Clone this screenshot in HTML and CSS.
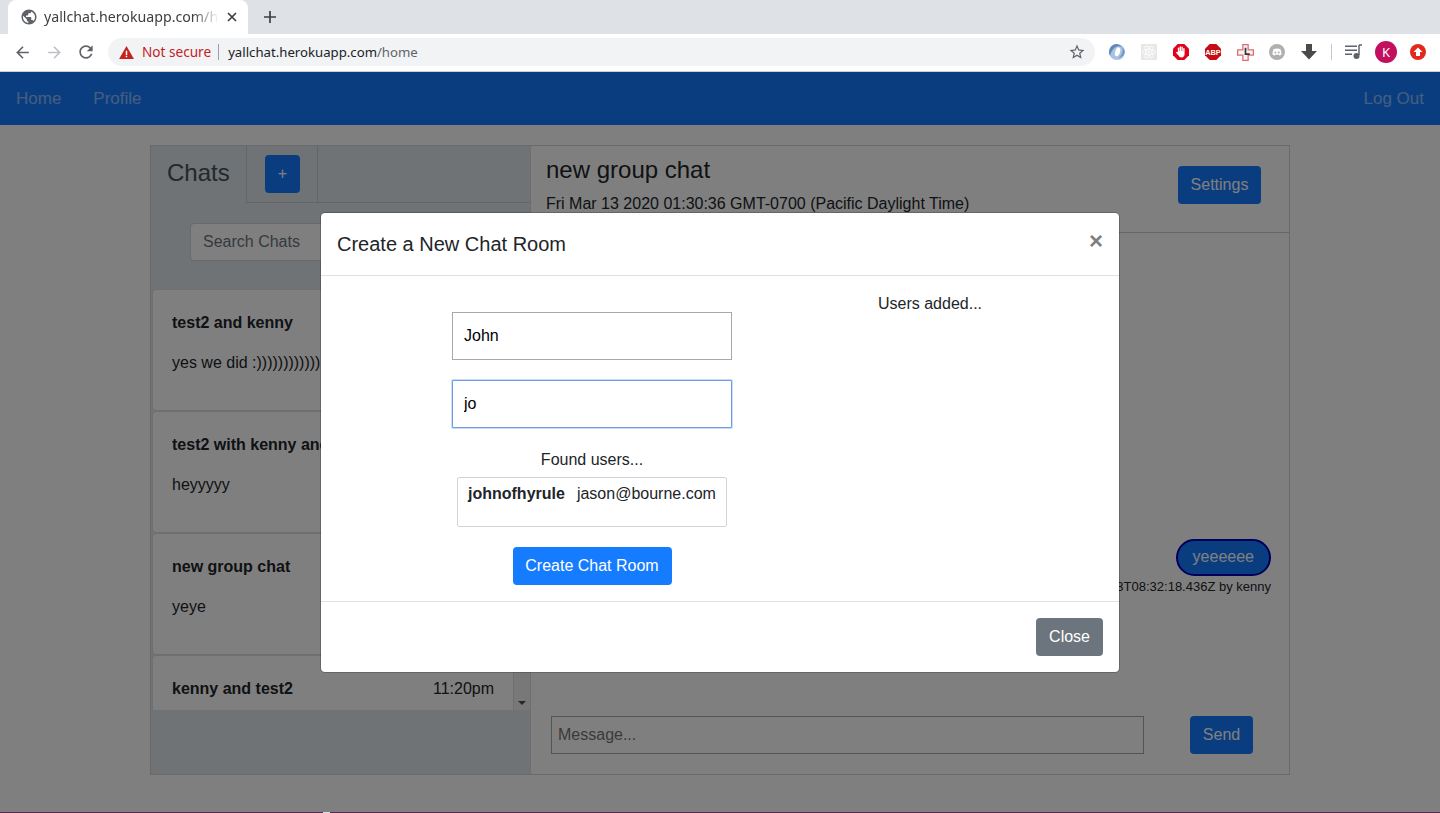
FILE: index.html
```html
<!DOCTYPE html>
<html lang="en">
<head>
<meta charset="utf-8">
<title>yallchat.herokuapp.com/home</title>
<link rel="stylesheet" href="styles.css">
</head>
<body>
<div class="browser">
  <div class="tabstrip">
    <div class="tab">
      <svg class="favicon" viewBox="0 0 24 24" width="18" height="18"><path fill="#5f6368" d="M12 2C6.48 2 2 6.48 2 12s4.48 10 10 10 10-4.48 10-10S17.52 2 12 2zm-1 17.93c-3.95-.49-7-3.85-7-7.93 0-.62.08-1.21.21-1.79L9 15v1c0 1.1.9 2 2 2v1.93zm6.9-2.54c-.26-.81-1-1.39-1.9-1.39h-1v-3c0-.55-.45-1-1-1H8v-2h2c.55 0 1-.45 1-1V7h2c1.1 0 2-.9 2-2v-.41c2.93 1.19 5 4.06 5 7.41 0 2.08-.8 3.97-2.1 5.39z"/></svg>
      <span class="tab-title">yallchat.herokuapp.com/home</span>
      <svg class="tab-x" viewBox="0 0 10 10" width="10" height="10"><path d="M1 1l8 8M9 1l-8 8" stroke="#3c4043" stroke-width="1.7" fill="none"/></svg>
    </div>
    <svg class="new-tab" viewBox="0 0 12 12" width="12" height="12"><path d="M6 0v12M0 6h12" stroke="#3c4043" stroke-width="1.7" fill="none"/></svg>
  </div>
  <div class="toolbar">
    <span class="slot"><svg viewBox="0 0 24 24" width="19" height="19"><path fill="#5f6368" d="M20 11H7.83l5.59-5.59L12 4l-8 8 8 8 1.41-1.41L7.83 13H20v-2z"/></svg></span>
    <span class="slot"><svg viewBox="0 0 24 24" width="19" height="19"><path fill="#bdc1c6" d="M12 4l-1.41 1.41L16.17 11H4v2h12.17l-5.58 5.59L12 20l8-8z"/></svg></span>
    <span class="slot"><svg viewBox="0 0 24 24" width="20" height="20"><path fill="#5f6368" d="M17.65 6.35C16.2 4.9 14.21 4 12 4c-4.42 0-7.99 3.58-7.99 8s3.57 8 7.99 8c3.73 0 6.84-2.55 7.73-6h-2.08c-.82 2.33-3.04 4-5.65 4-3.31 0-6-2.69-6-6s2.69-6 6-6c1.66 0 3.14.69 4.22 1.78L13 11h7V4l-2.35 2.35z"/></svg></span>
    <div class="omnibox">
      <svg class="warn" viewBox="0 0 16 14" width="15" height="13"><path fill="#c5221f" d="M8 0l8 14H0z"/><path fill="#fff" d="M7.2 5h1.6v4.6H7.2zM7.2 10.6h1.600v1.600H7.2z"/></svg>
      <span class="not-secure">Not secure</span>
      <span class="omni-sep"></span>
      <span class="url">yallchat.herokuapp.com<span class="url-path">/home</span></span>
      <svg class="star" viewBox="0 0 24 24" width="18" height="18"><path fill="#5f6368" d="M22 9.24l-7.19-.62L12 2 9.19 8.63 2 9.24l5.46 4.73L5.82 21 12 17.27 18.18 21l-1.63-7.03L22 9.24zM12 15.4l-3.76 2.27 1-4.28-3.32-2.88 4.38-.38L12 6.1l1.71 4.04 4.38.38-3.32 2.88 1 4.28L12 15.4z"/></svg>
    </div>
    <div class="extensions">
      <span class="slot"><svg viewBox="0 0 16 16" width="16" height="16"><circle cx="8" cy="8" r="8" fill="#a9c2e0"/><path d="M8 0a8 8 0 0 0-7 11.800C2 8 4 3.500 8 2.400c2.500-.7 4.500.5 5.500 1.800A8 8 0 0 0 8 0z" fill="#5d88ba"/><ellipse cx="8.600" cy="7.800" rx="2.400" ry="4.600" fill="#fff" transform="rotate(18 8.600 7.800)"/><path d="M13 3.500c1.500 3 .5 8-4 10.500 3-.2 6-2.600 6.600-5.500.2-2-.8-3.800-2.600-5z" fill="#6f97c6"/></svg></span>
      <span class="slot"><svg viewBox="0 0 16 16" width="16" height="16"><rect width="16" height="16" fill="#e8e8e8"/><g fill="none" stroke="#fafafa" stroke-width=".9"><ellipse cx="8" cy="8" rx="6.400" ry="2.600"/><ellipse cx="8" cy="8" rx="6.400" ry="2.600" transform="rotate(60 8 8)"/><ellipse cx="8" cy="8" rx="6.400" ry="2.600" transform="rotate(120 8 8)"/></g><circle cx="8" cy="8" r="1.200" fill="#fafafa"/></svg></span>
      <span class="slot"><svg viewBox="0 0 16 16" width="16" height="16"><path fill="#e2001a" d="M4.700 0h6.600L16 4.700v6.600L11.300 16H4.700L0 11.300V4.700z"/><path fill="#fff" d="M4.800 8V4.200a.7.7 0 0 1 1.400 0V7h.4V2.900a.7.7 0 0 1 1.400 0V7h.4V3.300a.7.7 0 0 1 1.400 0V7.500h.4V4.800a.7.7 0 0 1 1.400 0v5.200c0 2.200-1.300 3.500-3.100 3.500-1.500 0-2.400-.7-2.900-1.900L3.200 9c-.3-.7.600-1.300 1.100-.7z"/></svg></span>
      <span class="slot"><svg viewBox="0 0 16 16" width="16" height="16"><path fill="#c70d13" d="M4.700 0h6.600L16 4.700v6.600L11.300 16H4.700L0 11.300V4.700z"/><text x="8" y="11" class="abp-text" text-anchor="middle">ABP</text></svg></span>
      <span class="slot"><svg viewBox="0 0 16 16" width="17" height="17"><path fill="#f4f4f4" stroke="#e36a75" stroke-width="1.200" d="M5.500.6h5v4.900h4.900v5h-4.900v4.900h-5v-4.900H.6v-5h4.900z"/><path d="M8 3.500v6h4" fill="none" stroke="#333" stroke-width="1.600"/></svg></span>
      <span class="slot"><svg viewBox="0 0 16 16" width="16" height="16"><circle cx="8" cy="8" r="8" fill="#b0b0b0"/><path fill="#fff" d="M4.500 5.200c2.200-1 4.800-1 7 0 .8 1.800 1.100 3.500 1 5.300-.8.600-1.600.9-2.300 1l-.6-.9c-1.100.3-2.100.3-3.200 0l-.6.900c-.7-.1-1.500-.4-2.300-1-.1-1.800.2-3.500 1-5.300z"/><circle cx="6.300" cy="8.400" r="1" fill="#b0b0b0"/><circle cx="9.700" cy="8.400" r="1" fill="#b0b0b0"/></svg></span>
      <span class="slot"><svg viewBox="0 0 16 16" width="16" height="16"><path fill="#4a4a4a" d="M5 0h6v7h5l-8 8.500L0 7h5z"/></svg></span>
      <span class="tool-sep"></span>
      <span class="slot"><svg viewBox="0 0 18 16" width="18" height="16"><path d="M0 2.200h12M0 6.200h12M0 10.200h7" stroke="#5f6368" stroke-width="1.500" fill="none"/><path d="M14 1v10" stroke="#5f6368" stroke-width="1.500" fill="none"/><path d="M14 1h3" stroke="#5f6368" stroke-width="1.500" fill="none"/><circle cx="11.500" cy="12" r="3" fill="#5f6368"/></svg></span>
      <span class="slot"><span class="avatar">K</span></span>
      <span class="slot"><svg viewBox="0 0 16 16" width="16" height="16"><circle cx="8" cy="8" r="8" fill="#e02a20"/><path fill="#fff" d="M8 3.500l4.500 4.500H10v4H6V8H3.500z"/></svg></span>
    </div>
  </div>
  <div class="page">
    <nav class="navbar">
      <a class="nav-link">Home</a>
      <a class="nav-link">Profile</a>
      <a class="nav-link nav-end">Log Out</a>
    </nav>
    <main class="shell">
      <aside class="sidebar">
        <div class="side-tabs">
          <div class="side-tab side-tab-active"><h3 class="side-heading">Chats</h3></div>
          <div class="side-tab side-tab-add"><button class="btn btn-primary btn-add">+</button></div>
          <div class="side-tab side-tab-rest"></div>
        </div>
        <div class="search-zone"><input class="form-control search" placeholder="Search Chats"></div>
        <div class="chat-list">
          <div class="chat-cards">
            <div class="card"><div class="card-top"><b>test2 and kenny</b></div><p class="card-msg">yes we did :))))))))))))</p></div>
            <div class="card"><div class="card-top"><b>test2 with kenny and</b></div><p class="card-msg">heyyyyy</p></div>
            <div class="card"><div class="card-top"><b>new group chat</b></div><p class="card-msg">yeye</p></div>
            <div class="card"><div class="card-top"><b>kenny and test2</b><span>11:20pm</span></div></div>
          </div>
          <div class="scrollbar"><span class="scroll-arrow"></span></div>
        </div>
      </aside>
      <section class="chat">
        <header class="chat-head">
          <div>
            <h3 class="chat-title">new group chat</h3>
            <div class="chat-date">Fri Mar 13 2020 01:30:36 GMT-0700 (Pacific Daylight Time)</div>
          </div>
          <button class="btn btn-primary btn-settings">Settings</button>
        </header>
        <div class="messages">
          <div class="bubble">yeeeeee</div>
          <div class="caption">2020-03-13T08:32:18.436Z by kenny</div>
        </div>
        <div class="composer">
          <input class="message-input" placeholder="Message...">
          <button class="btn btn-primary btn-send">Send</button>
        </div>
      </section>
    </main>
    <div class="backdrop"></div>
    <div class="modal-wrap">
      <div class="modal">
        <div class="modal-head">
          <h5 class="modal-title">Create a New Chat Room</h5>
          <span class="modal-x">×</span>
        </div>
        <div class="modal-body">
          <div class="col-left">
            <input class="plain-input" value="John">
            <input class="plain-input plain-focus" value="jo">
            <div class="found-label">Found users...</div>
            <div class="found-box"><b>johnofhyrule</b><span>jason@bourne.com</span></div>
            <button class="btn btn-bright btn-create">Create Chat Room</button>
          </div>
          <div class="col-right">Users added...</div>
        </div>
        <div class="modal-foot"><button class="btn btn-gray">Close</button></div>
      </div>
    </div>
  </div>
  <div class="desk"><span class="desk-bit"></span></div>
</div>
</body>
</html>
```

FILE: styles.css
```css
* { box-sizing: border-box; }
html, body { margin: 0; height: 100%; overflow: hidden; }
body { font-family: "Liberation Sans", Arial, sans-serif; font-size: 16px; line-height: 24px; color: #212529; background: #fff; }
.browser { height: 813px; display: flex; flex-direction: column; }

/* browser chrome */
.tabstrip { height: 34px; background: #dee1e6; display: flex; align-items: flex-start; padding-left: 8px; }
.tab { width: 240px; height: 34px; background: #fff; border-radius: 8px 8px 0 0; display: flex; align-items: center; padding: 0 11px 0 12px; font-family: "Noto Sans", sans-serif; font-size: 14.2px; color: #3c4043; }
.favicon { flex: none; margin-right: 6px; }
.tab-title { flex: 1; overflow: hidden; white-space: nowrap; -webkit-mask-image: linear-gradient(90deg, #000 85%, transparent 100%); mask-image: linear-gradient(90deg, #000 85%, transparent 100%); margin-right: 8px; }
.tab-x { flex: none; }
.new-tab { margin: 11px 0 0 16px; }
.toolbar { height: 38px; background: #fff; border-bottom: 1px solid #ccd0d6; display: flex; align-items: center; padding: 0 6px 1px; }
.slot { width: 32px; height: 28px; flex: none; display: flex; align-items: center; justify-content: center; }
.omnibox { flex: 1; height: 28px; margin-left: 6px; background: #f1f3f4; border-radius: 14px; display: flex; align-items: center; padding: 0 9px 0 11px; font-family: "Noto Sans", sans-serif; font-size: 13.2px; white-space: nowrap; }
.warn { flex: none; margin-right: 8px; }
.not-secure { color: #c5221f; font-size: 13.6px; }
.omni-sep { width: 1px; height: 16px; background: #9aa0a6; margin: 0 9px 0 7px; }
.url { color: #202124; }
.url-path { color: #5f6368; }
.star { margin-left: auto; }
.extensions { display: flex; align-items: center; margin-left: 6px; }
.tool-sep { width: 13px; height: 16px; flex: none; display: flex; justify-content: center; }
.tool-sep::before { content: ""; width: 1px; height: 16px; background: #c4c7cb; }
.abp-text { font-family: "Liberation Sans", sans-serif; font-weight: 700; font-size: 7.4px; fill: #fff; }
.avatar { width: 22px; height: 22px; border-radius: 50%; background: #c2105f; color: #fff; font-family: "Noto Sans", sans-serif; font-size: 13px; line-height: 22px; text-align: center; }

/* app */
.page { position: relative; flex: 1; min-height: 0; background: #fff; display: flex; flex-direction: column; }
.navbar { height: 53px; background: #157bff; display: flex; align-items: center; padding: 0 16px; flex: none; }
.nav-link { color: rgba(255,255,255,.5); font-size: 17px; margin-right: 32px; }
.nav-end { margin: 0 0 0 auto; }
.shell { width: 1140px; height: 630px; margin: 20px 0 0 150px; border: 1px solid #d4d4d4; display: flex; }
.sidebar { width: 380px; flex: none; background: #dee6ea; border-right: 1px solid #d8dde0; display: flex; flex-direction: column; }
.side-tabs { display: flex; height: 57px; }
.side-tab { border-right: 1px solid #c4cdd1; border-bottom: 1px solid #c4cdd1; }
.side-tab-active { width: 96px; border-bottom: 0; padding: 12px 0 0 16px; }
.side-heading { margin: 0; font-size: 24px; font-weight: 400; line-height: 29px; color: #495057; }
.side-tab-add { width: 71px; padding: 9px 0 0 18px; }
.side-tab-rest { flex: 1; border-right: 0; }
.btn { font-family: inherit; font-size: 16px; line-height: 24px; border: 1px solid transparent; border-radius: 4px; padding: 6px 12px; color: #fff; display: inline-block; }
.btn-primary { background: #157bff; }
.btn-add { width: 35px; height: 38px; padding: 0; }
.search-zone { height: 86px; padding: 20px 38px 0 39px; }
.form-control { width: 100%; height: 38px; border: 1px solid #ced4da; border-radius: 4px; background: #fff; padding: 6px 12px; font: inherit; color: #495057; }
.form-control::placeholder { color: #6c757d; }
.chat-list { height: 421px; display: flex; overflow: hidden; padding-left: 1px; }
.chat-cards { width: 362px; flex: none; overflow: hidden; }
.card { background: #fff; border: 1px solid rgba(0,0,0,.125); border-radius: 4px; height: 122px; padding: 21px 19px 0; }
.card-top { display: flex; justify-content: space-between; }
.card-msg { margin: 16px 0 0; white-space: nowrap; }
.scrollbar { width: 16px; flex: none; background: #f0f0f0; display: flex; justify-content: center; align-items: flex-end; padding-bottom: 5px; margin-right: 1px; }
.scroll-arrow { width: 0; height: 0; border: 4px solid transparent; border-top: 4px solid #505050; border-bottom: 0; }

.chat { flex: 1; min-width: 0; display: flex; flex-direction: column; }
.chat-head { height: 87px; border-bottom: 1px solid #ccc; display: flex; justify-content: space-between; padding: 9px 28px 0 15px; flex: none; }
.chat-title { margin: 0 0 8px; font-size: 24px; font-weight: 400; line-height: 29px; }
.chat-date { line-height: 24px; white-space: nowrap; }
.btn-settings { width: 83px; height: 38px; margin-top: 11px; padding: 0; }
.messages { flex: 1; display: flex; flex-direction: column; align-items: flex-end; padding: 306px 18px 0 0; }
.bubble { height: 37px; padding: 4px 15px; background: #157bff; border: 2px solid #0000b4; border-radius: 19px; color: #fff; }
.caption { font-size: 13px; line-height: 16px; margin-top: 3px; }
.composer { display: flex; padding: 0 36px 20px 20px; flex: none; }
.message-input { width: 593px; height: 38px; border: 1px solid #a9a9a9; background: #fff; padding: 1px 6px; font: inherit; margin-right: 46px; }
.message-input::placeholder { color: #757575; }
.btn-send { width: 63px; height: 38px; padding: 0; }

/* overlay */
.backdrop { position: absolute; inset: 0; background: rgba(0,0,0,.5); }
.modal-wrap { position: absolute; inset: 0; padding-top: 140px; display: flex; justify-content: center; }
.modal { width: 800px; height: 461px; background: #fff; border: 1px solid rgba(0,0,0,.2); border-radius: 5px; background-clip: padding-box; display: flex; flex-direction: column; }
.modal-head { height: 63px; border-bottom: 1px solid #dee2e6; display: flex; justify-content: space-between; padding: 16px 16px 0; flex: none; }
.modal-title { margin: 0; font-size: 20px; font-weight: 400; line-height: 30px; }
.modal-x { font-size: 24px; font-weight: 700; line-height: 24px; color: #808080; }
.modal-body { flex: 1; display: flex; padding: 0 17px; }
.col-left { width: 508px; flex: none; display: flex; flex-direction: column; align-items: center; padding-top: 36px; }
.plain-input { width: 280px; height: 48px; border: 1px solid #a9a9a9; padding: 0 11px; font: inherit; color: #000; outline: 0; margin-bottom: 20px; background: #fff; flex: none; }
.plain-focus { border-color: #6f9ae8; box-shadow: 0 0 0 1px rgba(111,154,232,.35); border-radius: 1px; }
.found-label { line-height: 24px; }
.found-box { width: 270px; height: 50px; border: 1px solid #ced4da; border-radius: 2px; padding: 4px 10px 0; margin-top: 5px; white-space: nowrap; flex: none; }
.found-box b { margin-right: 12px; }
.btn-create { width: 159px; margin-top: 20px; padding: 0; flex: none; }
.btn-bright { background: #157bff; height: 38px; }
.col-right { width: 168px; flex: none; text-align: center; padding-top: 16px; }
.modal-foot { height: 71px; border-top: 1px solid #dee2e6; padding: 16px 16px 0; display: flex; justify-content: flex-end; flex: none; }
.btn-gray { background: #6c757d; height: 38px; }

.desk { height: 1px; background: #5a2a4e; flex: none; }
.desk-bit { display: block; width: 7px; height: 1px; margin-left: 323px; background: #ddd; }
```
